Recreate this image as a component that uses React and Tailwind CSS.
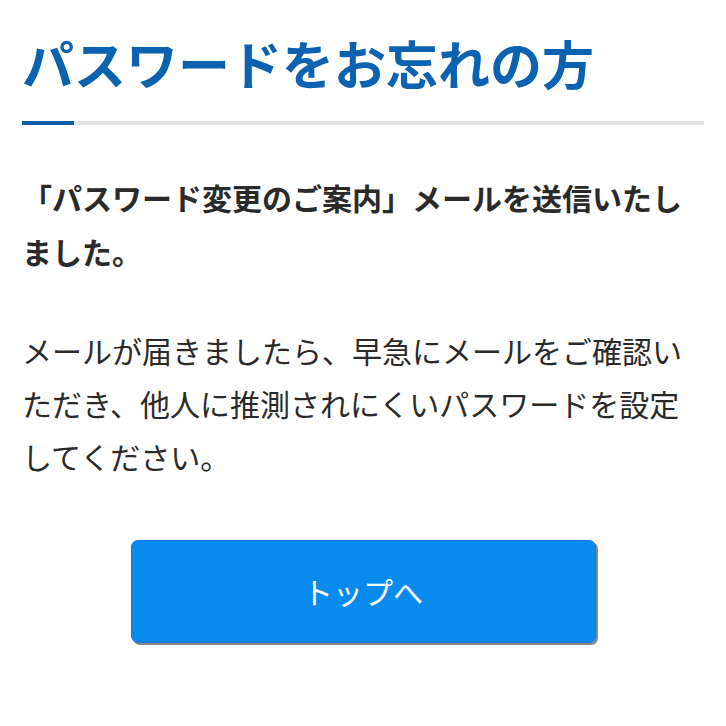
export default function App() {
  return (
    <div
      className="w-[726px] min-h-[726px] bg-white px-[22px] text-[#333333]"
      style={{ fontFamily: '"Noto Sans CJK JP", "Noto Sans", sans-serif' }}
    >
      <h1 className="pt-[24px] text-[52px] leading-[78px] font-bold text-[#0a62b0] tracking-[0px]">
        パスワードをお忘れの方
      </h1>
      <div className="mt-[19px] flex h-[4px] w-full">
        <div className="h-full w-[52px] bg-[#0a5fad]" />
        <div className="h-full flex-1 bg-[#e2e2e2]" />
      </div>
      <p className="mt-[45px] text-[30px] leading-[54px] font-bold text-[#2a2a2a]">
        「パスワード変更のご案内」メールを送信いたしました。
      </p>
      <p className="mt-[46px] text-[30px] leading-[53px] font-normal text-[#2a2a2a]">
        メールが届きましたら、早急にメールをご確認いただき、他人に推測されにくいパスワードを設定してください。
      </p>
      <div className="mt-[57px] flex justify-center">
        <button className="flex h-[103px] w-[465px] items-center justify-center rounded-[7px] border border-[#1a72ee] bg-[#078bed] text-[30px] text-white shadow-[2px_2px_0_#8a8a8a]">
          トップへ
        </button>
      </div>
    </div>
  );
}
